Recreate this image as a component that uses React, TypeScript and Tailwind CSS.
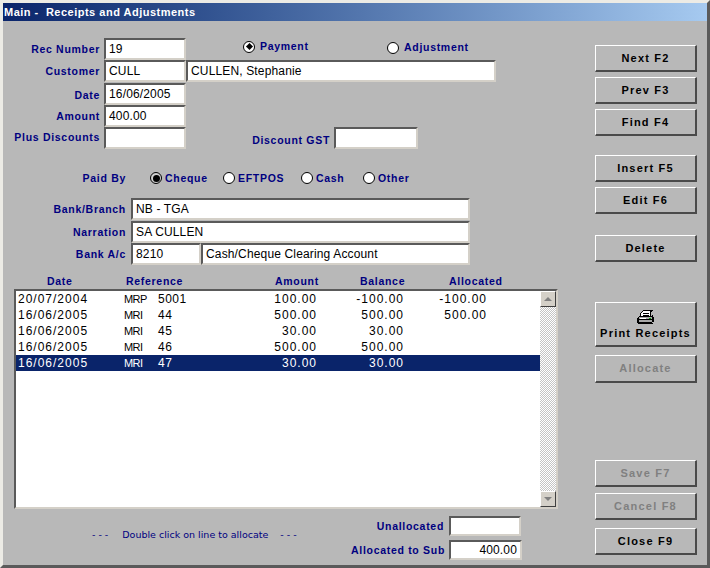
import React from "react";

const labelCls = "font-['Liberation_Sans',sans-serif] font-bold text-[10.5px] tracking-[0.7px] text-[#000080] whitespace-nowrap leading-none";
const valueCls = "font-['Liberation_Sans',sans-serif] text-[12px] tracking-[0.15px] text-black whitespace-nowrap leading-none";
const listCls = "font-['Liberation_Sans',sans-serif] text-[12px] tracking-[1px] whitespace-nowrap leading-none";

function Field({ w, h = "h-[22px]", value = "", right = false, cls = "" }: { w: string; h?: string; value?: string; right?: boolean; cls?: string }) {
  return (
    <div className={`${w} ${h} ${cls} shrink-0 bg-white border-2 border-t-[#5a5a5a] border-l-[#5a5a5a] border-b-[#d4d0c8] border-r-[#d4d0c8] flex items-center px-[3px] ${right ? "justify-end" : ""} ${valueCls}`}>
      {value}
    </div>
  );
}

function Radio({ on = false, dark = false }: { on?: boolean; dark?: boolean }) {
  return (
    <span className={`w-[12px] h-[12px] shrink-0 rounded-full border border-black ${dark ? "bg-[#d0d0d0]" : "bg-white"} flex items-center justify-center`}>
      {on && <span className={`${dark ? "w-[7px] h-[7px] rounded-full" : "w-[5px] h-[5px] rotate-45"} bg-black`} />}
    </span>
  );
}

function Btn({ children, disabled = false, h = "h-[27px]", cls = "" }: { children: React.ReactNode; disabled?: boolean; h?: string; cls?: string }) {
  return (
    <div className={`${h} ${cls} w-[102px] shrink-0 border border-t-white border-l-white border-r-2 border-b-2 border-r-[#4a4a4a] border-b-[#4a4a4a] flex flex-col items-center justify-center font-['Liberation_Sans',sans-serif] font-bold text-[11px] tracking-[1.2px] leading-none ${disabled ? "text-[#808080]" : "text-black"}`}>
      {children}
    </div>
  );
}

function Printer() {
  return (
    <svg width="17" height="15" viewBox="0 0 17 15" shapeRendering="crispEdges" className="mb-[3px]">
      <path fill="#fff" d="M6 1h9v1h-1v4H4V3h1V2h1z" />
      <path fill="#000" d="M6 0h10v1h-1v1h-1v5h-1V1H6zM5 1h1v1H5zM4 2h1v1H4zM3 3h1v4H3zM6 3h6v1H6zM6 5h6v1H6z" />
      <path fill="#a8a8a8" d="M2 7h13v5H2z" />
      <path fill="#000" d="M2 6h13v1H2zM15 5h1v2h-1zM1 7h1v1H1zM0 8h2v5H0zM15 7h2v5h-2zM2 9h13v1H2zM1 13h15v1H1zM2 12h13v1H2z" />
      <path fill="#fff" d="M3 8h6v1H3z" />
      <path fill="#00a000" d="M12 8h2v1h-2z" />
    </svg>
  );
}

const rows = [
  ["20/07/2004", "MRP", "5001", "100.00", "-100.00", "-100.00"],
  ["16/06/2005", "MRI", "44", "500.00", "500.00", "500.00"],
  ["16/06/2005", "MRI", "45", "30.00", "30.00", ""],
  ["16/06/2005", "MRI", "46", "500.00", "500.00", ""],
  ["16/06/2005", "MRI", "47", "30.00", "30.00", ""],
];

export default function App() {
  return (
    <div className="w-[710px] h-[568px] overflow-hidden border-[3px] border-t-[#ecebe5] border-l-[#ecebe5] border-r-[#5a5a5a] border-b-[#5a5a5a] bg-[#b8b8b8] flex flex-col">
      <div className="h-[18px] shrink-0 bg-gradient-to-r from-[#0a246a] to-[#a6caf0] flex items-center pl-[1px] font-['Liberation_Sans',sans-serif] font-bold text-[11px] tracking-[0.5px] text-white whitespace-nowrap leading-none">
        Main - &nbsp;Receipts and Adjustments
      </div>
      <div className="flex flex-1 min-h-0">
        {/* Left */}
        <div className="w-[592px] shrink-0 flex flex-col pt-[17px]">
          <div className="flex items-center h-[22px]">
            <div className={`w-[97px] text-right ${labelCls}`}>Rec Number</div>
            <Field w="w-[82px]" cls="ml-[4px]" value="19" />
            <div className="flex items-center ml-[57px] gap-[5px] -mt-[5px]">
              <Radio on />
              <span className={`w-[74px] ${labelCls}`}>Payment</span>
            </div>
            <div className="flex items-center ml-[53px] gap-[5px] -mt-[3px]">
              <Radio />
              <span className={labelCls}>Adjustment</span>
            </div>
          </div>
          <div className="flex items-center h-[22px]">
            <div className={`w-[97px] text-right pt-[1px] ${labelCls}`}>Customer</div>
            <Field w="w-[82px]" cls="ml-[4px]" value="CULL" />
            <Field w="w-[310px]" value="CULLEN, Stephanie" />
          </div>
          <div className="flex items-center h-[22px] mt-[1px]">
            <div className={`w-[97px] text-right pt-[3px] ${labelCls}`}>Date</div>
            <Field w="w-[82px]" cls="ml-[4px]" value="16/06/2005" />
          </div>
          <div className="flex items-center h-[22px]">
            <div className={`w-[97px] text-right pt-[1px] ${labelCls}`}>Amount</div>
            <Field w="w-[82px]" cls="ml-[4px]" value="400.00" />
          </div>
          <div className="flex items-center h-[22px]">
            <div className={`w-[97px] text-right -mt-[2px] ${labelCls}`}>Plus Discounts</div>
            <Field w="w-[82px]" cls="ml-[4px]" />
            <div className={`w-[144px] text-right pt-[5px] ${labelCls}`}>Discount GST</div>
            <Field w="w-[84px]" cls="ml-[4px]" />
          </div>

          <div className="flex items-center h-[18px] mt-[20px]">
            <div className={`w-[123px] text-right ${labelCls}`}>Paid By</div>
            <div className="flex items-center ml-[24px] gap-[3px]">
              <Radio on dark />
              <span className={`w-[58px] ${labelCls}`}>Cheque</span>
            </div>
            <div className="flex items-center gap-[3px]">
              <Radio />
              <span className={`w-[63px] ${labelCls}`}>EFTPOS</span>
            </div>
            <div className="flex items-center gap-[3px]">
              <Radio />
              <span className={`w-[47px] ${labelCls}`}>Cash</span>
            </div>
            <div className="flex items-center gap-[3px]">
              <Radio />
              <span className={labelCls}>Other</span>
            </div>
          </div>

          <div className="flex items-center h-[22px] mt-[11px]">
            <div className={`w-[123px] text-right pt-[1px] ${labelCls}`}>Bank/Branch</div>
            <Field w="w-[339px]" cls="ml-[5px]" value="NB - TGA" />
          </div>
          <div className="flex items-center h-[22px] mt-[1px]">
            <div className={`w-[123px] text-right pt-[1px] ${labelCls}`}>Narration</div>
            <Field w="w-[339px]" cls="ml-[5px]" value="SA CULLEN" />
          </div>
          <div className="flex items-center h-[22px]">
            <div className={`w-[123px] text-right pt-[1px] ${labelCls}`}>Bank A/c</div>
            <Field w="w-[70px]" cls="ml-[5px]" value="8210" />
            <Field w="w-[269px]" value="Cash/Cheque Clearing Account" />
          </div>

          {/* Column heads */}
          <div className={`flex items-center h-[14px] mt-[9px] pt-[1px] ${labelCls}`}>
            <div className="w-[79px] ml-[44px]">Date</div>
            <div className="w-[149px]">Reference</div>
            <div className="w-[85px]">Amount</div>
            <div className="w-[89px]">Balance</div>
            <div>Allocated</div>
          </div>

          {/* List */}
          <div className="ml-[11px] mt-[1px] w-[544px] h-[220px] shrink-0 border-2 border-t-[#5a5a5a] border-l-[#5a5a5a] border-b-[#d4d0c8] border-r-[#d4d0c8] flex">
            <div className="w-[524px] bg-white flex flex-col">
              {rows.map((r, i) => (
                <div key={i} className={`h-[16px] shrink-0 flex items-center pl-[2px] ${listCls} ${i === 4 ? "bg-[#0a246a] text-white" : "text-black"}`}>
                  <span className="w-[106px]">{r[0]}</span>
                  <span className="w-[34px] text-[11px] tracking-[-0.6px]">{r[1]}</span>
                  <span className="w-[50px] tracking-[0.5px]">{r[2]}</span>
                  <span className="w-[109px] text-right">{r[3]}</span>
                  <span className="w-[87px] text-right">{r[4]}</span>
                  <span className="w-[83px] text-right">{r[5]}</span>
                </div>
              ))}
            </div>
            <div className="w-[16px] flex flex-col justify-between bg-white bg-[conic-gradient(#ffffff_25%,#c4c4c4_0_50%,#ffffff_0_75%,#c4c4c4_0)] bg-[length:2px_2px]">
              <div className="h-[16px] bg-[#d4d0c8] border border-t-white border-l-white border-r-[#404040] border-b-[#404040] flex items-center justify-center">
                <span className="w-0 h-0 border-x-[4px] border-x-transparent border-b-[4px] border-b-[#808080]" />
              </div>
              <div className="h-[16px] bg-[#d4d0c8] border border-t-white border-l-white border-r-[#404040] border-b-[#404040] flex items-center justify-center">
                <span className="w-0 h-0 border-x-[4px] border-x-transparent border-t-[4px] border-t-[#808080]" />
              </div>
            </div>
          </div>

          {/* Bottom */}
          <div className="flex mt-[7px]">
            <div className="w-[348px] pl-[89px] pt-[14px] font-['DejaVu_Sans',sans-serif] text-[9.5px] text-[#000080] whitespace-nowrap leading-none">
              <span className="tracking-[3px]">---</span>
              <span className="ml-[11px]">Double click on line to allocate</span>
              <span className="ml-[12px] tracking-[3px]">---</span>
            </div>
            <div className="flex flex-col">
              <div className="flex items-center h-[20px]">
                <div className={`w-[93px] text-right pt-[1px] ${labelCls}`}>Unallocated</div>
                <Field w="w-[72px]" h="h-[20px]" cls="ml-[5px]" />
              </div>
              <div className="flex items-center h-[20px] mt-[4px]">
                <div className={`w-[93px] text-right ${labelCls}`}>Allocated to Sub</div>
                <Field w="w-[73px]" h="h-[20px]" cls="ml-[5px]" value="400.00" right />
              </div>
            </div>
          </div>
        </div>

        {/* Right buttons */}
        <div className="flex flex-col pt-[24px]">
          <Btn>Next F2</Btn>
          <Btn cls="mt-[5px]">Prev F3</Btn>
          <Btn cls="mt-[5px]">Find F4</Btn>
          <Btn cls="mt-[19px]">Insert F5</Btn>
          <Btn cls="mt-[5px]">Edit F6</Btn>
          <Btn cls="mt-[21px]">Delete</Btn>
          <Btn cls="mt-[40px]" h="h-[45px]"><Printer />Print Receipts</Btn>
          <Btn cls="mt-[8px]" h="h-[28px]" disabled>Allocate</Btn>
          <Btn cls="mt-[77px]" disabled>Save F7</Btn>
          <Btn cls="mt-[6px]" disabled>Cancel F8</Btn>
          <Btn cls="mt-[8px]">Close F9</Btn>
        </div>
      </div>
    </div>
  );
}
